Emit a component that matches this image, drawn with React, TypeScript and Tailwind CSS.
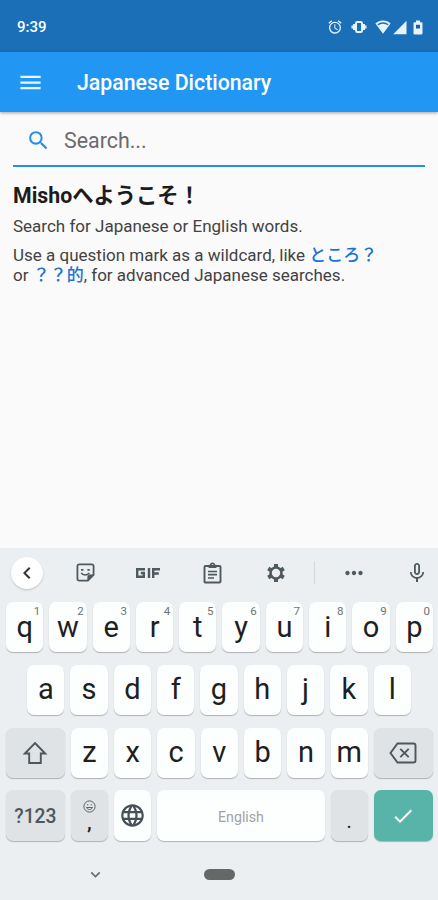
import type { ReactNode } from "react"
import {
  MdAlarm,
  MdCheck,
  MdChevronLeft,
  MdExpandMore,
  MdLanguage,
  MdMenu,
  MdMicNone,
  MdMoreHoriz,
  MdSearch,
} from "react-icons/md"

const topRow = ["q", "w", "e", "r", "t", "y", "u", "i", "o", "p"]
const homeRow = ["a", "s", "d", "f", "g", "h", "j", "k", "l"]
const bottomRow = ["z", "x", "c", "v", "b", "n", "m"]

function StatusBar() {
  return (
    <div className="flex h-[52px] items-center bg-[#1a6fb7] pl-[17px] pr-[15px] pt-[2px] text-white">
      <span className="text-[15px] font-medium leading-none">9:39</span>
      <div className="ml-auto flex h-4 items-center text-[#e6f2fc]">
        <MdAlarm className="mr-[8px] h-4 w-4" />
        <svg className="mr-[8px] h-4 w-4" viewBox="0 0 16 16" fill="none" stroke="currentColor">
          <rect x="5" y="3" width="6" height="10" rx="1.200" strokeWidth="2" />
          <path d="M3 5v6M13 5v6" strokeWidth="2" />
          <path d="M1.200 6.500v3M14.800 6.500v3" strokeWidth="1.500" />
        </svg>
        <svg className="mr-[2px] h-4 w-4" viewBox="0 0 16 16">
          <path d="M8 14.800.4 4.600C2.400 2.400 5 1.400 8 1.400s5.600 1 7.600 3.200z" fill="currentColor" />
          <path d="M2.800 5.700C4.200 4.600 6 4 8 4s3.800.6 5.200 1.700" fill="none" stroke="#1a6fb7" strokeWidth="1.300" />
        </svg>
        <svg className="mr-[6px] h-[15px] w-[14px]" viewBox="0 0 14 15" fill="currentColor">
          <path d="M13.500.8v13.400H.2z" />
        </svg>
        <svg className="h-[15px] w-[10px]" viewBox="0 0 10 15">
          <path d="M3 .5h4v1.700h1.200q1.300 0 1.300 1.300v9.700q0 1.300-1.300 1.300H1.800Q.5 14.500.5 13.200V3.500q0-1.300 1.300-1.300H3z" fill="currentColor" />
          <path d="M3 4.800h4v3.700H3z" fill="#1a5f9e" />
        </svg>
      </div>
    </div>
  )
}

function AppBar() {
  return (
    <header className="relative flex h-[60px] items-center bg-[#2196f3] pl-[17px] text-white shadow-[0_1px_3px_rgba(0,0,0,0.35)]">
      <MdMenu className="h-[27px] w-[27px] text-[#e9f5ff]" />
      <h1 className="ml-[33px] pt-[2px] text-[21.300px] font-medium leading-none">Japanese Dictionary</h1>
    </header>
  )
}

function Welcome() {
  return (
    <main className="h-[436px] px-[13px]">
      <div className="flex h-[55px] items-center border-b-2 border-[#2490e4] pl-[13px] pt-[4px]">
        <MdSearch className="h-[25px] w-[25px] text-[#2490e8]" />
        <span className="ml-[13px] pt-px text-[21.400px] leading-none text-[#6b6b6b]">Search...</span>
      </div>
      <h2 className="mt-[16px] text-[21.300px] font-bold leading-[26px] text-[#1c1c1c]">Mishoへようこそ！</h2>
      <p className="mt-[7px] text-[17px] leading-5 text-[#424242]">Search for Japanese or English words.</p>
      <p className="mt-[9px] whitespace-nowrap text-[17px] leading-5 text-[#424242]">
        Use a question mark as a wildcard, like <span className="font-medium text-[#1c72d4]">ところ？</span>
        <br />
        or <span className="font-medium text-[#1c72d4]">？？的</span>, for advanced Japanese searches.
      </p>
    </main>
  )
}

function Toolbar() {
  return (
    <div className="grid h-[54px] grid-cols-[53px_64px_61px_67px_61px_17px_61px_54px] items-center justify-items-center pb-[5px] text-[#4d5a60]">
      <span className="ml-px flex h-8 w-8 items-center justify-center rounded-full bg-white shadow-[0_1px_2px_rgba(0,0,0,0.2)]">
        <MdChevronLeft className="h-6 w-6 text-[#333]" />
      </span>
      <svg className="h-[19px] w-[19px]" viewBox="0 0 20 20" fill="none" stroke="currentColor" strokeWidth="1.900">
        <path d="M3.500 1.500h13q2 0 2 2v9l-6 6h-9q-2 0-2-2v-13q0-2 2-2z" />
        <path d="M18 12.500h-3.500q-2 0-2 2V18z" fill="currentColor" strokeWidth="1" />
        <path d="M5.300 7.200h2.500M12 7.200h2.500" strokeWidth="1.700" />
        <path d="M5.500 10.500c1.500 2.800 6.500 2.800 8.500 0" strokeWidth="1.600" />
      </svg>
      <svg className="h-3 w-[26px]" viewBox="0 0 26 12" fill="none" stroke="currentColor" strokeWidth="2.400">
        <path d="M10 2.200H2.200v7.600h6.600V6H5.800M14 1v10M18.200 11V2.200H25M18.200 6.500h5.600" />
      </svg>
      <svg className="ml-px h-[22px] w-[19px]" viewBox="0 0 19 22" fill="none" stroke="currentColor" strokeWidth="1.900">
        <rect x="1.500" y="4" width="16" height="16.500" rx="1" />
        <path d="M5.500 2.800h8V6h-8z" fill="currentColor" stroke="none" />
        <circle cx="9.500" cy="3" r="1.800" strokeWidth="1.500" />
        <path d="M5 9.500h9M5 12.700h9M5 16h6" strokeWidth="1.700" />
      </svg>
      <svg className="h-5 w-5" viewBox="0 0 20 20" fill="none" stroke="currentColor">
        <circle cx="10" cy="10" r="5.500" strokeWidth="2.600" />
        <path d="M10 1v3.500M10 15.500V19M2.200 5.500l3 1.750M14.800 12.750l3 1.750M2.200 14.500l3-1.750M14.800 7.250l3-1.750" strokeWidth="4" />
      </svg>
      <span className="h-[23px] w-px bg-[#d3d7d9]" />
      <MdMoreHoriz className="h-[26px] w-[26px]" />
      <MdMicNone className="ml-[11px] h-6 w-6" />
    </div>
  )
}

function Key({ children, className = "h-[50px] w-[37.300px] bg-[#fdfefe]", hint }: { children: ReactNode; className?: string; hint?: number }) {
  return (
    <div className={`relative flex shrink-0 items-center justify-center rounded-[7px] text-[29px] leading-none text-[#1d1f20] shadow-[0_1px_1px_rgba(0,0,0,0.26)] ${className}`}>
      {children}
      {hint !== undefined && <span className="absolute right-[3px] top-[4px] text-[11.500px] leading-none text-[#6e7375]">{hint}</span>}
    </div>
  )
}

function Keyboard() {
  return (
    <section className="h-[352px] bg-[#eceff1]">
      <Toolbar />
      <div className="flex flex-col gap-[12.800px] px-[6px]">
        <div className="flex gap-[6px]">
          {topRow.map((k, i) => (
            <Key key={k} hint={(i + 1) % 10}>{k}</Key>
          ))}
        </div>
        <div className="flex justify-center gap-[6px]">
          {homeRow.map((k) => (
            <Key key={k}>{k}</Key>
          ))}
        </div>
        <div className="flex gap-[6px]">
          <Key className="h-[50px] w-[58.800px] bg-[#dfe3e5]">
            <svg className="h-6 w-[26px] text-[#4d575c]" viewBox="0 0 26 24" fill="none" stroke="currentColor" strokeWidth="1.900">
              <path d="M13 2 23.200 12.500h-4.400v9.500H7.200v-9.500H2.800z" />
            </svg>
          </Key>
          {bottomRow.map((k) => (
            <Key key={k}>{k}</Key>
          ))}
          <Key className="h-[50px] w-[58.800px] bg-[#dfe3e5]">
            <svg className="h-[22px] w-[28px] text-[#4d575c]" viewBox="0 0 28 22" fill="none" stroke="currentColor" strokeWidth="1.900">
              <path d="M8.500 1.500h16q2 0 2 2v15q0 2-2 2h-16L1.500 11z" />
              <path d="m11.300 6.800 8.400 8.400m0-8.400-8.400 8.400" />
            </svg>
          </Key>
        </div>
        <div className="flex gap-[6px]">
          <Key className="h-[51px] w-[58.800px] bg-[#dfe3e5]">
            <span className="pt-px text-[19.300px] font-medium text-[#4d575c]">?123</span>
          </Key>
          <Key className="h-[51px] w-[37.300px] bg-[#dfe3e5]">
            <div className="flex flex-col items-center">
              <svg className="h-[13px] w-[13px] text-[#5a6367]" viewBox="0 0 13 13" fill="none" stroke="currentColor">
                <circle cx="6.500" cy="6.500" r="5.600" />
                <path d="M4 4.800h1.300M7.700 4.800H9M3.500 7.500c1 2.700 5 2.700 6 0z" />
              </svg>
              <span className="text-[21px] font-medium leading-[18px]">,</span>
            </div>
          </Key>
          <Key className="h-[51px] w-[37.300px] bg-[#fdfefe]">
            <MdLanguage className="h-[27px] w-[27px] text-[#465157]" />
          </Key>
          <Key className="h-[51px] w-[167.200px] bg-[#fdfefe]">
            <span className="pt-[2px] text-[14.200px] text-[#a0a3a4]">English</span>
          </Key>
          <Key className="h-[51px] w-[37.300px] bg-[#dfe3e5]">
            <span className="pt-[11px] text-[20px]">.</span>
          </Key>
          <Key className="h-[51px] w-[58.800px] bg-[#58b4a8]">
            <MdCheck className="h-6 w-6 text-white" />
          </Key>
        </div>
      </div>
      <div className="mt-[21.500px] flex h-6 items-center pl-[86px]">
        <MdExpandMore className="h-[19px] w-[19px] text-[#62686b]" />
        <span className="ml-[99px] h-[11px] w-[31px] rounded-full bg-[#666867]" />
      </div>
    </section>
  )
}

export default function App() {
  return (
    <div className="h-[900px] w-[438px] overflow-hidden bg-[#fafafa] font-[Roboto,'Noto_Sans_CJK_JP',sans-serif]">
      <StatusBar />
      <AppBar />
      <Welcome />
      <Keyboard />
    </div>
  )
}
